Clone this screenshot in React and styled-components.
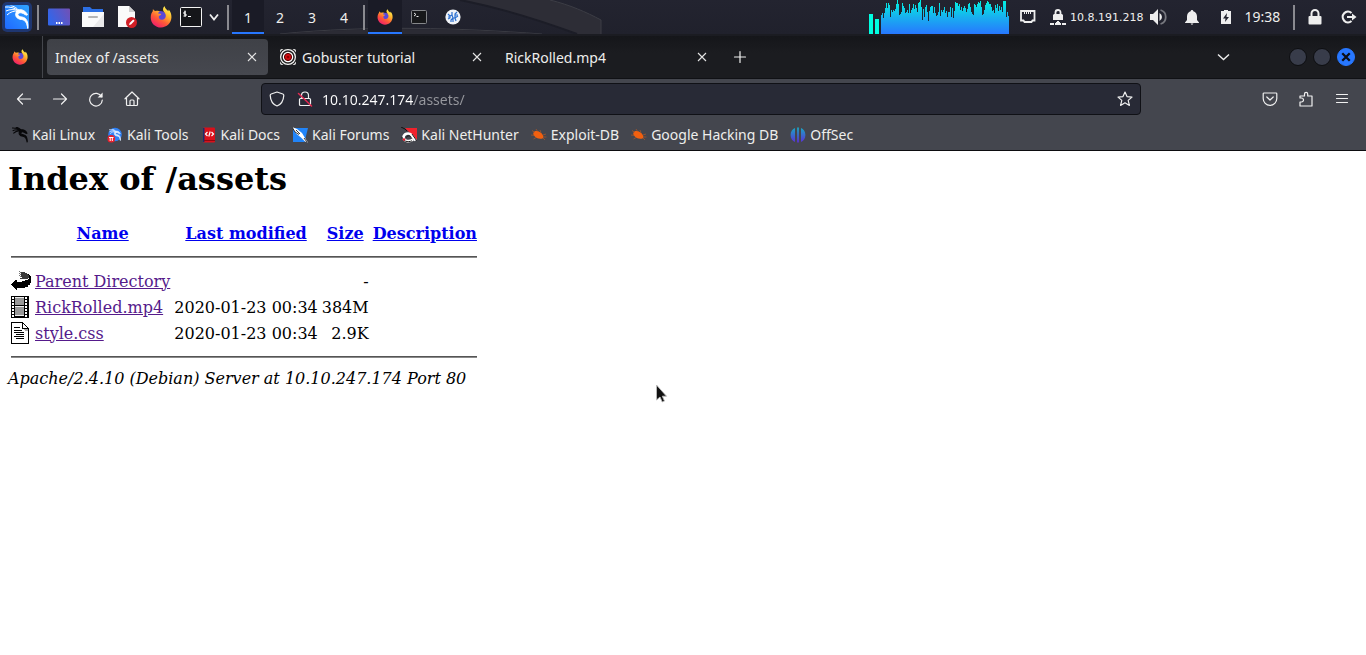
import React from "react";
import styled, { createGlobalStyle, css } from "styled-components";

const GlobalStyle = createGlobalStyle`
  * { box-sizing: border-box; }
  html, body, #root { height: 100%; }
  body {
    margin: 0;
    background: #ffffff;
    font-family: "Noto Sans", sans-serif;
    font-size: 14px;
    color: #eeeeec;
  }
  button {
    border: 0;
    padding: 0;
    background: none;
    color: inherit;
    font: inherit;
  }
  svg { display: block; flex: none; }
`;

const Desktop = styled.div`
  position: relative;
  min-height: 100%;
  display: flex;
  flex-direction: column;
  overflow: hidden;
`;

/* ---------- desktop panel ---------- */

const Panel = styled.header`
  position: relative;
  display: flex;
  height: 36px;
  background: linear-gradient(#232430, #20212c);
  border-bottom: 2px solid #1b1c22;
`;

const Wallpaper = styled.svg`
  position: absolute;
  left: 280px;
  top: 0;
`;

const PanelGroup = styled.div`
  position: relative;
  display: flex;
  align-items: stretch;
`;

const PanelSpacer = styled.div`
  flex: 1;
`;

const PanelButton = styled.button`
  width: ${(p) => p.$width || 34}px;
  height: 34px;
  display: flex;
  align-items: center;
  justify-content: center;
  ${(p) =>
    p.$active &&
    css`
      background: #1a1b26;
      border-bottom: 2px solid #2777ff;
      padding-top: 2px;
    `}
`;

const PanelSeparator = styled.div`
  width: 8px;
  height: 34px;
  display: flex;
  align-items: center;
  justify-content: center;
  &::before {
    content: "";
    width: 2px;
    height: 25px;
    background: #8a8a90;
  }
`;

const Network = styled.button`
  width: 96px;
  display: flex;
  align-items: center;
  gap: 4px;
  padding-left: 5px;
  font-family: "DejaVu Sans", sans-serif;
  font-size: 11px;
  white-space: nowrap;
`;

const Clock = styled.time`
  width: 39px;
  margin-right: 8px;
  line-height: 34px;
  text-align: center;
`;

/* ---------- browser chrome ---------- */

const TabStrip = styled.div`
  display: flex;
  align-items: center;
  height: 42px;
  background: linear-gradient(#15161a, #1b1c20 40%, #1b1c20);
`;

const FirefoxView = styled.button`
  width: 43px;
  height: 42px;
  padding-left: 12px;
  margin-right: 4px;
  border-right: 1px solid #44464c;
`;

const Tabs = styled.div`
  display: flex;
  gap: 4px;
`;

const Tab = styled.div`
  width: 221px;
  height: 36px;
  display: flex;
  align-items: center;
  gap: 6px;
  padding: 0 11px 0 8px;
  border-radius: 4px;
  background: ${(p) => (p.$active ? "linear-gradient(#3f4147, #46484f)" : "none")};
`;

const TabTitle = styled.span`
  flex: 1;
  white-space: nowrap;
`;

const StripButton = styled.button`
  width: ${(p) => p.$width}px;
  height: 36px;
  display: flex;
  align-items: center;
  justify-content: center;
`;

const WindowControls = styled.div`
  display: flex;
  gap: 6px;
  padding: 0 11px 0 56px;
`;

const WindowButton = styled.button`
  width: 18px;
  height: 18px;
  display: flex;
  align-items: center;
  justify-content: center;
  border-radius: 50%;
  border: 1px solid ${(p) => (p.$close ? "#2777ff" : "#0d0e11")};
  background: ${(p) => (p.$close ? "#2777ff" : "#383c4a")};
`;

const NavBar = styled.nav`
  display: flex;
  align-items: center;
  height: 41px;
  padding: 0 6px;
  background: #44464e;
  border-top: 1px solid #101115;
`;

const NavButton = styled.button`
  width: 36px;
  height: 32px;
  display: flex;
  align-items: center;
  justify-content: center;
`;

const UrlBar = styled.label`
  flex: 1;
  min-width: 0;
  height: 32px;
  margin: 0 111px;
  padding: 0 7px;
  display: flex;
  align-items: center;
  gap: 12px;
  border: 1px solid #101116;
  border-radius: 4px;
  background: #282a36;
`;

const UrlInput = styled.input`
  flex: 1;
  min-width: 0;
  height: 28px;
  margin-left: -3px;
  padding: 0;
  border: 0;
  outline: 0;
  font: inherit;
  color: #ffffff;
  background: linear-gradient(90deg, #ffffff 92px, #97989e 92px);
  -webkit-background-clip: text;
  background-clip: text;
  -webkit-text-fill-color: transparent;
`;

const Bookmarks = styled.div`
  display: flex;
  align-items: center;
  height: 32px;
  padding: 0 6px;
  background: #44464e;
  border-bottom: 1px solid #0c0c0f;
`;

const Bookmark = styled.a`
  display: flex;
  align-items: center;
  gap: 4px;
  padding: 0 6px;
  color: #eeeeec;
  text-decoration: none;
  white-space: nowrap;
`;

/* ---------- directory listing ---------- */

const Page = styled.main`
  flex: 1;
  padding: 8px;
  background: #ffffff;
  color: #000000;
  font-family: "DejaVu Serif", serif;
  font-size: 16px;
`;

const Heading = styled.h1`
  margin: 0 0 20px;
  font-size: 32px;
  line-height: 40px;
`;

const Listing = styled.table`
  border-spacing: 2px;
  line-height: 19px;
  td, th {
    height: 24px;
    padding: 1px;
    white-space: nowrap;
  }
  th[colspan] { height: 20px; }
`;

const Num = styled.td`
  text-align: right;
`;

const Rule = styled.hr`
  margin: 8px 0;
  height: 2px;
  border: 0;
  border-top: 1px solid #555555;
  border-bottom: 1px solid #8a8a8a;
`;

const SortLink = styled.a`
  color: #0000ee;
`;

const FileLink = styled.a`
  color: #551a8b;
`;

const Footer = styled.address`
  line-height: 19px;
`;

const Cursor = styled.svg`
  position: absolute;
  left: 48%;
  top: 384px;
`;

/* ---------- icons ---------- */

function Firefox({ size, id }) {
  return (
    <svg width={size} height={size} viewBox="0 0 24 24">
      <defs>
        <linearGradient id={id} x1="0.8" y1="0.05" x2="0.25" y2="0.95">
          <stop offset="0" stopColor="#fff34f" />
          <stop offset="0.35" stopColor="#ffb02e" />
          <stop offset="0.65" stopColor="#ff5b36" />
          <stop offset="1" stopColor="#f0206a" />
        </linearGradient>
      </defs>
      <circle cx="11.5" cy="12.5" r="7" fill="#5b48d8" />
      <path
        fill={`url(#${id})`}
        d="M3.2 3.2C4 4.5 5 5.3 6.200 5.500c1.600-.5 3.300-.4 4.800.4-1.200.3-2 1-2.300 1.900.8.6 2 .4 3.500.8-.3 1.200-1.800 1.700-2.600 2.200-.5 2.800 1.500 4.600 4 4.200 2.900-.5 4.300-3.200 3.300-5.900-.7-2-2.600-3-2.700-5.300 0-1.500.7-2.800 1.900-3.500.1 2.600 2.300 3.500 3.900 5.300.3-.5.300-1.100.2-1.700 2.200 2.200 3.300 5 3.200 8.500C23.200 18.500 18.400 23.500 12 23.500S.8 18.600.8 12.500C.8 9 2 7 3 5.800z"
      />
    </svg>
  );
}

/* The Kali dragon: wing feathers, head and a tail that tapers to the corner. */
const Dragon = ({ color, weight = 1, size = 16, ...rest }) => (
  <svg width={size} height={size} viewBox="0 0 24 24" fill="none" stroke={color} strokeWidth={weight} {...rest}>
    <path d="M0 1.500C5 1.200 9 2.200 13.500 5M1 5.500C5 3.600 9 3.800 13.500 5M2 9.500C5 6.500 9 5.200 13 5.500M5.500 0C9 .8 12 2.500 14 5" />
    <path d="M13 4.500c4-1 7.500.8 9.500 4.700l-1.200.5-3-1.700C16.500 7 14.500 7 13.500 8z" fill={color} />
    <path
      d="M12 5c-3 5-.5 8.500 4.500 9 4 .4 5.300 3.500 6.300 9 .5-7-1.300-10.800-6-11.500C13 11 11.500 9 14.500 6z"
      fill={color}
    />
  </svg>
);

const KaliLogo = () => (
  <svg width="30" height="30" viewBox="0 0 30 30">
    <defs>
      <linearGradient id="kaliBg" x1="0" y1="1" x2="1" y2="0">
        <stop offset="0" stopColor="#1f69ff" />
        <stop offset="1" stopColor="#2fa4ff" />
      </linearGradient>
    </defs>
    <rect width="30" height="30" rx="5" fill="#1d4fc4" opacity="0.45" />
    <rect x="3" y="3" width="24" height="24" rx="2" fill="url(#kaliBg)" />
    <Dragon x="3" y="3.500" size={24} color="#ffffff" />
  </svg>
);

const DesktopIcon = () => (
  <svg width="22" height="18" viewBox="0 0 22 18">
    <defs>
      <linearGradient id="deskBg" x1="0" y1="0.4" x2="1" y2="0">
        <stop offset="0" stopColor="#3465e8" />
        <stop offset="1" stopColor="#7350b4" />
      </linearGradient>
    </defs>
    <rect y="0.500" width="22" height="17" rx="1" fill="url(#deskBg)" />
    <path d="M8 14h1.500v2H8zM10.500 14H12v2h-1.500zM13 14h1.500v2H13z" fill="#fff" />
  </svg>
);

const FolderIcon = () => (
  <svg width="22" height="20" viewBox="0 0 22 20">
    <path d="M1 0h7l2 2h11v6H1z" fill="#2c6fe4" />
    <path d="M0 5h22v15H0z" fill="#fafafa" />
    <path d="M22 7v13H11z" fill="#e9e9ea" />
    <rect x="6" y="9" width="10" height="2" rx="1" fill="#b5b5b5" />
  </svg>
);

const EditorIcon = () => (
  <svg width="20" height="22" viewBox="0 0 20 22">
    <path d="M1 0h11l6 6v15H1z" fill="#fafafa" />
    <path d="M12 0l6 6h-6z" fill="#cfcfd0" />
    <circle cx="14.500" cy="16.500" r="5.500" fill="#d11f26" />
    <path d="M12 19l.6-2 3.600-3.600 1.400 1.400-3.600 3.600z" fill="#fff" />
  </svg>
);

const TerminalIcon = () => (
  <svg width="22" height="20" viewBox="0 0 22 20">
    <rect x="0.500" y="0.500" width="21" height="19" rx="1" fill="#15161a" stroke="#f4f4f4" />
    <path d="M6 5H4v2h2v2H3.500M5 3.500v6M8 9.500h3" stroke="#fff" fill="none" />
  </svg>
);

const MiniTerminalIcon = () => (
  <svg width="16" height="14" viewBox="0 0 16 14">
    <rect x="0.500" y="0.500" width="15" height="13" rx="1" fill="#17181a" stroke="#85878a" />
    <path d="M3 3l2 1.500L3 6M5.500 6.500h2" stroke="#e8e8e8" fill="none" />
  </svg>
);

const BurpIcon = () => (
  <svg width="16" height="16" viewBox="0 0 16 16">
    <circle cx="8" cy="8" r="7.600" fill="#f0f3f8" />
    <path
      d="M3 5l2 2v2l-2 1M5 7l2-1V3M7 6l1 3-2 2v2M8 9h2l3-2M10 9V5l2-2M10 9l1 3M10 6h3M8 9v4M3 8h2"
      stroke="#2a6fd0"
      strokeWidth="1.200"
      fill="none"
    />
  </svg>
);

const Chevron = ({ w = 12, stroke = 1.4 }) => (
  <svg width={w} height="8" viewBox={`0 0 ${w} 8`}>
    <path d={`M1 1.500l${w / 2 - 1} 5 ${w / 2 - 1}-5`} stroke="#eee" strokeWidth={stroke} fill="none" />
  </svg>
);

const EthernetIcon = () => (
  <svg width="16" height="14" viewBox="0 0 16 14">
    <path d="M1 1h13.500v9.500h-2l-1 1.500h-7l-1-1.500H1z" fill="none" stroke="#eee" strokeWidth="1.800" />
    <path d="M4.500 2v2M6.500 2v2M8.500 2v2M10.500 2v2" stroke="#eee" />
  </svg>
);

const VpnIcon = () => (
  <svg width="16" height="16" viewBox="0 0 16 16">
    <path d="M5.500 6V3.500a2.500 2.500 0 0 1 5 0V6" fill="none" stroke="#eee" strokeWidth="1.800" />
    <path d="M4 5h8l1 1v5H3V6zM0 14h4v2H0zM5 14h1v-1h1v-1h2v1h1v1h1v2H5zM12 14h4v2h-4z" fill="#eee" />
  </svg>
);

const VolumeIcon = () => (
  <svg width="18" height="16" viewBox="0 0 18 16">
    <path d="M1 5h3l5-5v16l-5-5H1z" fill="#eee" />
    <path d="M10.500 4a4.500 4.500 0 0 1 0 8z" fill="#eee" />
    <path d="M11.500 1a7.300 7.300 0 0 1 0 14" fill="none" stroke="#77787f" strokeWidth="1.800" />
  </svg>
);

const BellIcon = () => (
  <svg width="14" height="15" viewBox="0 0 14 15">
    <path d="M7 0c.9 0 1.300.6 1.300 1.300C10.800 2 12 4 12 6.500V10l2 2.500v.5H0v-.5L2 10V6.500C2 4 3.200 2 5.700 1.300 5.700.6 6.100 0 7 0zM5.500 13.500h3L7 15z" fill="#eee" />
  </svg>
);

const BatteryIcon = () => (
  <svg width="10" height="14" viewBox="0 0 10 14">
    <path d="M3 0h4v1h3v13H0V1h3z" fill="#eee" />
    <path d="M6 3L2 8.500h2.500L4 12l4-5H5.500z" fill="#22232e" />
  </svg>
);

const LockIcon = () => (
  <svg width="14" height="16" viewBox="0 0 14 16">
    <path d="M3.500 8V4.500a3.500 3.500 0 0 1 7 0V8" fill="none" stroke="#eee" strokeWidth="2" />
    <rect x="0.500" y="7" width="13" height="8.500" rx="1" fill="#eee" />
  </svg>
);

const LogoutIcon = () => (
  <svg width="16" height="14" viewBox="0 0 16 14">
    <path d="M10.500 3A5.300 5.300 0 1 0 10.500 11" fill="none" stroke="#eee" strokeWidth="2.200" />
    <path d="M6 6h5V3.500L15.500 7 11 10.500V8H6z" fill="#eee" />
  </svg>
);

const CloseIcon = () => (
  <svg width="10" height="10" viewBox="0 0 10 10">
    <path d="M1 1l8 8M9 1L1 9" stroke="#e4e4e4" strokeWidth="1.100" />
  </svg>
);

const TargetIcon = () => (
  <svg width="16" height="16" viewBox="0 0 16 16">
    <rect width="16" height="16" rx="2" fill="#f4f4f4" />
    <circle cx="8" cy="8" r="8.600" fill="none" stroke="#222" strokeWidth="1.200" />
    <circle cx="8" cy="8" r="6" fill="#fff" stroke="#222" strokeWidth="1.500" />
    <circle cx="8" cy="8" r="3.600" fill="#d00c10" stroke="#500" />
    <circle cx="8" cy="8" r="1.300" fill="#8c0000" />
  </svg>
);

const Stroke = ({ d, size = 16, children }) => (
  <svg width={size} height={size} viewBox="0 0 16 16" fill="none" stroke="#f0f0f0" strokeWidth="1.200" strokeLinecap="round" strokeLinejoin="round">
    <path d={d} />
    {children}
  </svg>
);

const ReloadIcon = () => (
  <Stroke d="M13.600 5.800A6.300 6.300 0 1 0 14.300 9">
    <path d="M14.600 1.500v5H9.600z" fill="#f0f0f0" stroke="none" />
  </Stroke>
);

const InsecureIcon = () => (
  <Stroke d="M4.500 7.500V4.500a3.500 3.500 0 0 1 7 0v3M3.500 7.500h9a1 1 0 0 1 1 1v5a1 1 0 0 1-1 1h-9a1 1 0 0 1-1-1v-5a1 1 0 0 1 1-1z">
    <path d="M1.500 2.500l13 12.500" stroke="#e22850" strokeWidth="1.500" />
  </Stroke>
);

const ToolsIcon = () => (
  <svg width="16" height="16" viewBox="0 0 16 16">
    <circle cx="8" cy="7.500" r="6.800" fill="#2f80f4" />
    <Dragon x="2" y="2" size={12} color="#dcebff" weight={1.5} />
    <rect x="0.500" y="8" width="7.500" height="7.500" rx="3.500" fill="#e8202c" />
    <path d="M2 10.500h4.500M3.200 10.500v3.500M5.300 10.500v3.500" stroke="#fff" />
  </svg>
);

const DocsIcon = () => (
  <svg width="16" height="16" viewBox="0 0 16 16">
    <rect x="2" y="0.500" width="12" height="15" rx="1" fill="#d9101a" />
    <path d="M2 1h1.500v14H2z" fill="#1b2c6e" />
    <path d="M6.500 5L4.500 7l2 2M10.500 5l2 2-2 2M9.200 4.500L7.800 9.500" stroke="#fff" fill="none" strokeWidth="1.200" />
    <path d="M3 13.500h11" stroke="#8d0710" />
  </svg>
);

const ForumsIcon = () => (
  <svg width="16" height="16" viewBox="0 0 16 16">
    <path d="M1 1h15L12.500 15H1z" fill="#2184f8" />
    <path d="M0 0l5 2 5 4 3 5 3 4.500-3-1-4-4-5-4z" fill="#fff" />
    <path d="M0 0l3 5 4 2.500M4 3l4 4M12 11l3 4" stroke="#222" strokeWidth="0.900" fill="none" />
  </svg>
);

const NetHunterIcon = () => (
  <svg width="16" height="16" viewBox="0 0 16 16">
    <path d="M4 1h12v12z" fill="#f0222c" />
    <path d="M0 0l4 2 2 2" stroke="#111" fill="none" />
    <path d="M12 12.500C8 15.500 2.500 14 2.500 10.500S7.500 5 10.500 8L14.500 13.500" stroke="#fff" strokeWidth="2.600" fill="none" />
    <path d="M11 13.800C7 15.800 1 14 1 10M5.500 10.500c0-2 3-2 4-1M11 7l4.500 6.500" stroke="#191919" fill="none" />
    <circle cx="3" cy="12.500" r="1.300" fill="#e3182a" />
  </svg>
);

const BugIcon = () => (
  <svg width="16" height="16" viewBox="0 0 16 16">
    <path d="M3.500 4.500C6 3.300 10.500 5 12 8.500c.8 1.800 0 3-1.500 3.300-3.200.4-6.200-1.200-7.600-3.300-1.100-1.700-.6-3.400.6-4z" fill="#f2600f" />
    <path d="M1 3.500l3 2M5 2L7 5M9 3l1 2.500M15 7l-3 1M15.500 10H12M0 8l3.500.5M2.500 12L6 10M12 11l2 2" stroke="#c05a22" strokeWidth="0.600" fill="none" />
  </svg>
);

const OffSecIcon = () => (
  <svg width="16" height="16" viewBox="0 0 16 16">
    <defs>
      <linearGradient id="offsec" x1="0" y1="0" x2="0" y2="1">
        <stop offset="0" stopColor="#17a9c4" />
        <stop offset="1" stopColor="#5a2fd6" />
      </linearGradient>
    </defs>
    <path d="M5 1v14C2.500 14 .6 11.500.6 8S2.500 2 5 1zM7.100.5h1.800v15H7.100zM11 1c2.500 1 4.400 3.500 4.400 7s-1.900 6-4.400 7z" fill="url(#offsec)" />
  </svg>
);

const BackIcon = () => (
  <svg width="20" height="20" viewBox="0 0 20 20" shapeRendering="crispEdges">
    <path d="M17 3h1v1h1v1h1v7h-1v2h-2v2h-3v1H6v2H5v-1H4v-1H3v-1H2v-1H1v-1H0v-1h1v-1h1v-1h1v-1h1v-1h2v2h5v-1h3v-1h2V9h1V8h1V6h-1z" fill="#000" />
    <path d="M10 1h4v1h2v1h1v1h1v3h-1v1H9V7h2V6h-1z" fill="#3a3a3a" />
    <path d="M8 0h1v1H8zM9 1h1v1H9zM8 2h1v1H8zM9 3h1v1H9zM8 4h1v1H8zM9 5h1v1H9z" fill="#777" />
  </svg>
);

const sprockets = [2, 5, 8, 11, 14, 17, 20];

const MovieIcon = () => (
  <svg width="20" height="22" viewBox="0 0 20 22" shapeRendering="crispEdges">
    <path d="M0 0h18v22H0z" fill="#000" />
    <path d="M4 2h9v7H4zM4 11h9v8H4z" fill="#999" />
    <path d="M4 1h9v1H4zM4 10h9v1H4zM4 19h9v1H4z" fill="#eee" />
    {sprockets.map((y) => (
      <path key={y} d={`M1 ${y - 1}h2v2H1zM14 ${y - 1}h2v2h-2z`} fill="#fff" />
    ))}
  </svg>
);

const TextIcon = () => (
  <svg width="20" height="22" viewBox="0 0 20 22" shapeRendering="crispEdges">
    <path d="M0 0h12v1h1v1h1v1h1v1h1v1h1v1h1v16H0z" fill="#000" />
    <path d="M1 1h10v6h6v14H1z" fill="#fff" />
    <path d="M12 2h1v1h1v1h1v1h1v1h-4z" fill="#fff" />
    <path d="M13 7h4v2h-3V8h-1z" fill="#aaa" />
    <path d="M3 5h6v1H3zM3 8h8v1H3zM3 10h10v1H3zM5 12h8v1H5zM3 14h10v1H3zM5 16h8v1H5z" fill="#000" />
  </svg>
);

/* ---------- data ---------- */

const cpuTops = [
  15, 13, 18, 13, 8, 3, 8, 3, 5, 17, 10, 12, 10, 11, 9, 4, 0, 4, 15, 14, 12, 3, 6, 8, 13, 12, 10, 13, 4, 13, 10, 8,
  4, 9, 5, 8, 12, 3, 2, 0, 7, 20, 9, 17, 7, 5, 12, 21, 11, 7, 6, 6, 13, 7, 13, 16, 15, 12, 3, 16, 10, 12, 10, 7, 13,
  11, 17, 12, 12, 7, 17, 8, 18, 11, 2, 3, 3, 6, 4, 10, 7, 11, 8, 6, 8, 12, 9, 4, 3, 7, 12, 14, 15, 4, 5, 7, 4, 2, 3,
  1, 7, 15, 14, 10, 5, 3, 1, 2, 4, 4, 7, 11, 10, 13, 5, 8, 4, 11, 6, 10, 7, 12, 1, 1, 1, 17, 12, 16,
];

const CpuGraph = () => (
  <svg width="142" height="34" viewBox="0 0 142 34" shapeRendering="crispEdges">
    <defs>
      <linearGradient id="cpu" gradientUnits="userSpaceOnUse" x1="0" y1="0" x2="0" y2="34">
        <stop offset="0" stopColor="#00f6e0" />
        <stop offset="0.500" stopColor="#18b0ef" />
        <stop offset="1" stopColor="#2777ff" />
      </linearGradient>
    </defs>
    <path d="M0 14h4v20H0zM6 19h4v15H6z" fill="#00ffe1" />
    <path d={cpuTops.map((top, i) => `M${12 + i} ${top}h1V34h-1z`).join("")} fill="url(#cpu)" />
  </svg>
);

const bookmarks = [
  ["Kali Linux", <Dragon key="i" color="#08080a" weight={1.6} />],
  ["Kali Tools", <ToolsIcon key="i" />],
  ["Kali Docs", <DocsIcon key="i" />],
  ["Kali Forums", <ForumsIcon key="i" />],
  ["Kali NetHunter", <NetHunterIcon key="i" />],
  ["Exploit-DB", <BugIcon key="i" />],
  ["Google Hacking DB", <BugIcon key="i" />],
  ["OffSec", <OffSecIcon key="i" />],
];

const tabs = [
  { title: "Index of /assets", active: true },
  { title: "Gobuster tutorial", icon: <TargetIcon /> },
  { title: "RickRolled.mp4" },
];

const files = [
  { name: "Parent Directory", icon: <BackIcon />, modified: "", size: "-" },
  { name: "RickRolled.mp4", icon: <MovieIcon />, modified: "2020-01-23 00:34", size: "384M" },
  { name: "style.css", icon: <TextIcon />, modified: "2020-01-23 00:34", size: "2.9K" },
];

export default function App() {
  return (
    <Desktop>
      <GlobalStyle />

      <Panel>
        <Wallpaper width="330" height="34" viewBox="0 0 330 34">
          <path d="M180 0h90c20 5 36 12 51 20v14h-24C262 21 226 9 180 0z" fill="#2d2d36" />
          <path d="M270 0c20 5 36 12 51 20v14M0 34c90-9 180-6 262 0" fill="none" stroke="#3c3d45" />
          <path d="M180 0c46 9 82 21 117 34" fill="none" stroke="#1c1d27" strokeWidth="2" />
          <path d="M0 34c90-8 180-5 262 0z" fill="#2b2b34" />
        </Wallpaper>
        <PanelGroup>
          <PanelButton aria-label="Applications"><KaliLogo /></PanelButton>
          <PanelSeparator />
          <PanelButton aria-label="Show desktop"><DesktopIcon /></PanelButton>
          <PanelButton aria-label="Files"><FolderIcon /></PanelButton>
          <PanelButton aria-label="Text editor"><EditorIcon /></PanelButton>
          <PanelButton aria-label="Firefox"><Firefox size={22} id="ffLaunch" /></PanelButton>
          <PanelButton aria-label="Terminal" $width={26}><TerminalIcon /></PanelButton>
          <PanelButton aria-label="More terminals" $width={20}><Chevron w={10} stroke={1.8} /></PanelButton>
          <PanelSeparator />
          {[1, 2, 3, 4].map((n) => (
            <PanelButton key={n} $width={32} $active={n === 1}>{n}</PanelButton>
          ))}
          <PanelSeparator />
          <PanelButton aria-label="Firefox window" $active><Firefox size={16} id="ffTask" /></PanelButton>
          <PanelButton aria-label="Terminal window"><MiniTerminalIcon /></PanelButton>
          <PanelButton aria-label="Network tool window"><BurpIcon /></PanelButton>
        </PanelGroup>
        <PanelSpacer />
        <PanelGroup>
          <CpuGraph />
          <PanelButton aria-label="Ethernet"><EthernetIcon /></PanelButton>
          <Network><VpnIcon />10.8.191.218</Network>
          <PanelButton aria-label="Volume"><VolumeIcon /></PanelButton>
          <PanelButton aria-label="Notifications"><BellIcon /></PanelButton>
          <PanelButton aria-label="Battery"><BatteryIcon /></PanelButton>
          <Clock>19:38</Clock>
          <PanelSeparator />
          <PanelButton aria-label="Lock screen"><LockIcon /></PanelButton>
          <PanelButton aria-label="Log out"><LogoutIcon /></PanelButton>
        </PanelGroup>
      </Panel>

      <TabStrip>
        <FirefoxView aria-label="Firefox View"><Firefox size={16} id="ffView" /></FirefoxView>
        <Tabs>
          {tabs.map((t) => (
            <Tab key={t.title} $active={t.active}>
              {t.icon}
              <TabTitle>{t.title}</TabTitle>
              <button aria-label={`Close ${t.title}`}><CloseIcon /></button>
            </Tab>
          ))}
        </Tabs>
        <StripButton aria-label="New tab" $width={43}>
          <Stroke size={16} d="M8 2.500v11M2.500 8h11" />
        </StripButton>
        <PanelSpacer />
        <StripButton aria-label="List all tabs" $width={20}><Chevron w={13} /></StripButton>
        <WindowControls>
          <WindowButton aria-label="Minimize" />
          <WindowButton aria-label="Maximize" />
          <WindowButton aria-label="Close window" $close>
            <svg width="10" height="10" viewBox="0 0 8 8"><path d="M1 1l6 6M7 1L1 7" stroke="#0c0e14" strokeWidth="1.800" /></svg>
          </WindowButton>
        </WindowControls>
      </TabStrip>

      <NavBar>
        <NavButton aria-label="Back"><Stroke d="M14.500 8h-13M6.500 3L1.500 8l5 5" /></NavButton>
        <NavButton aria-label="Forward"><Stroke d="M1.500 8h13M9.500 3l5 5-5 5" /></NavButton>
        <NavButton aria-label="Reload"><ReloadIcon /></NavButton>
        <NavButton aria-label="Home">
          <Stroke d="M1 7.800L8 1l7 6.800M2.500 7v6.500a1 1 0 0 0 1 1h9a1 1 0 0 0 1-1V7M6 14.500V10a1 1 0 0 1 1-1h2a1 1 0 0 1 1 1v4.500" />
        </NavButton>
        <UrlBar>
          <Stroke d="M8 1l5.800 2c.7.300 1 .8 1 1.400C14.500 9.500 12 13.500 8 15 4 13.500 1.500 9.500 1.200 4.400c0-.6.300-1.100 1-1.400z" />
          <InsecureIcon />
          <UrlInput aria-label="Address" defaultValue="10.10.247.174/assets/" spellCheck={false} />
          <Stroke d="M8 1l2 4.600 5 .5-3.800 3.300 1.200 5L8 11.800l-4.400 2.600 1.200-5L1 6.100l5-.5z" />
        </UrlBar>
        <NavButton aria-label="Save to Pocket">
          <Stroke d="M2 2h12a.8.8 0 0 1 .8.8V7.500a6.800 6.800 0 0 1-13.600 0V2.800A.8.8 0 0 1 2 2zM4.800 6L8 9l3.200-3" />
        </NavButton>
        <NavButton aria-label="Extensions">
          <Stroke d="M2 15V11h1.500a2 2 0 0 0 0-4H2V5h4.500V3a1.600 1.600 0 0 1 3.200 0v2H14v10z" />
        </NavButton>
        <NavButton aria-label="Menu"><Stroke d="M2.500 3.500h11M2.500 7.500h11M2.500 11.500h11" /></NavButton>
      </NavBar>

      <Bookmarks>
        {bookmarks.map(([label, icon]) => (
          <Bookmark key={label} href="#">{icon}{label}</Bookmark>
        ))}
      </Bookmarks>

      <Page>
        <Heading>Index of /assets</Heading>
        <Listing>
          <thead>
            <tr>
              <th aria-label="Type" />
              <th><SortLink href="#name">Name</SortLink></th>
              <th><SortLink href="#modified">Last modified</SortLink></th>
              <th><SortLink href="#size">Size</SortLink></th>
              <th><SortLink href="#description">Description</SortLink></th>
            </tr>
            <tr><th colSpan={5}><Rule /></th></tr>
          </thead>
          <tbody>
            {files.map((f) => (
              <tr key={f.name}>
                <td>{f.icon}</td>
                <td><FileLink href={`#${f.name}`}>{f.name}</FileLink></td>
                <Num>{f.modified}</Num>
                <Num>{f.size}</Num>
                <td />
              </tr>
            ))}
            <tr><th colSpan={5}><Rule /></th></tr>
          </tbody>
        </Listing>
        <Footer>Apache/2.4.10 (Debian) Server at 10.10.247.174 Port 80</Footer>
      </Page>

      <Cursor width="14" height="20" viewBox="0 0 14 20">
        <path d="M0.500 1v15l3.500-3 2.200 5 2.300-1-2.200-4.800H10.500z" fill="#111" stroke="#bbb" strokeWidth="0.900" />
      </Cursor>
    </Desktop>
  );
}
